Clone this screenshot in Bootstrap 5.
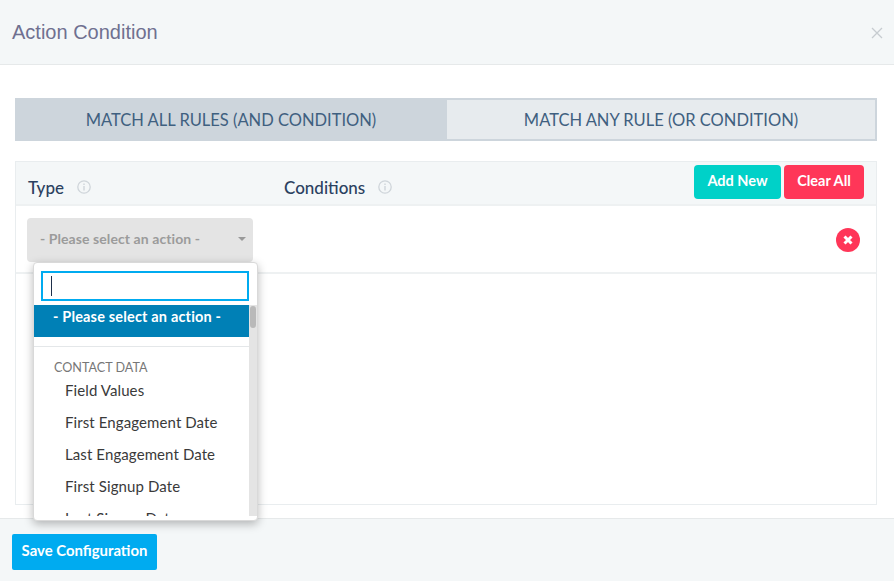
<!DOCTYPE html>
<html lang="en">
<head>
<meta charset="utf-8">
<title>Action Condition</title>
<link href="https://cdn.jsdelivr.net/npm/bootstrap@5.3.0/dist/css/bootstrap.min.css" rel="stylesheet">
<style>
html,body{height:100%;overflow:hidden;background:#fff}
body{font-family:"Lato","Liberation Sans",sans-serif;color:#2b3f5c}
.shell{height:581px}
.topbar{height:65px;background:#f4f7f8;border-bottom:1px solid #e6e9ea;padding:0 12px}
.topbar h1{font:400 20px/1 "Liberation Sans",Arial,sans-serif;color:#6f7090;margin:0}
.closer{width:12px;height:12px;margin-right:-1px;color:#c6ccd0;display:block;position:relative;top:1px}
.mainzone{height:453px;padding:33px 17px 13px 15px}
.tabs{height:43px;font-size:16.5px;font-weight:400;color:#3f6080;margin-bottom:20px}
.tabx.on{background:#cdd5dc;width:432px;padding-top:1px}
.tabx.off{background:#e7ebee;border:2px solid #cdd5dc;border-left:0;flex:1;padding-top:1px}
.grid-box{height:344px;border:1px solid #e9edef;position:relative}
.gridhead{height:44px;background:#f4f7f8;border-bottom:2px solid #eef1f2;padding:0 12px 0 12px}
.hcell{font-size:17px;font-weight:500;color:#2b4160;line-height:1;position:relative;top:4px}
.hcell.first{width:256px;gap:13px}
.hcell.second{gap:13px}
.btnx{height:34px;border:0;border-radius:4px;color:#fff;font-size:14.5px;font-weight:700;line-height:1;position:relative;top:-1px;padding:0 0 2px}
.btnx.teal{background:#00d1c8;width:87px}
.btnx.red{background:#ff3658;width:80px;margin-left:3px}
.datarow{height:68px;border-bottom:2px solid #eef1f2;padding:1px 16px 0 11px}
.selbox{width:226px;height:44px;background:#e4e4e4;border-radius:4px;color:#9b9b9b;font-size:14px;font-weight:700;padding:0 7px 2px 13px;letter-spacing:.08px}
.caretx{width:0;height:0;border:4px solid transparent;border-top:4px solid #999;border-bottom:0}
.delx{width:24px;height:24px;background:#ff3658;border-radius:50%}
.popup{position:absolute;left:17px;top:100px;width:225px;height:259px;background:#fff;border:1px solid #d9d9d9;border-radius:4px;box-shadow:0 3px 10px rgba(0,0,0,.28);overflow:hidden}
.searchline{padding:8px 8px 4px 7px;height:42px}
.searchfield{height:30px;border:2px solid #00abf0;padding:0 0 0 8px;display:flex;align-items:center}
.cursorbar{display:block;width:1px;height:20px;background:#1e2f4a}
.optzone{height:211px;overflow:hidden;position:relative;padding-right:8px}
.picked{height:32px;background:#0080b6;color:#fff;font-size:14.5px;font-weight:700;padding:3px 0 0 19px;line-height:18px;letter-spacing:.17px}
.sepline{border-top:1px solid #e4e7e9;margin-top:9px;height:12px}
.grouphd{font-size:12.6px;color:#777;padding-left:20px;line-height:20px}
.optline{font-size:15px;color:#3a3a3a;height:32px;line-height:18px;padding:3px 0 0 31px;letter-spacing:.1px}
.scrollrail{position:absolute;right:0;top:0;bottom:0;width:8px;background:#e4e4e4}
.scrollthumb{margin:1px 0 0 1px;width:6px;height:22px;background:#b9b9b9;border-radius:3px}
.bottombar{height:63px;background:#f4f7f8;border-top:1px solid #e6e9ea;padding:15px 12px 0}
.savebtn{width:145px;height:36px;background:#00abf0;color:#fff;border:0;border-radius:2px;padding:0 0 3px;font-size:14.9px;font-weight:700}
</style>
</head>
<body>
<div class="shell d-flex flex-column">
  <div class="topbar d-flex align-items-center justify-content-between">
    <h1>Action Condition</h1>
    <svg class="closer" viewBox="0 0 12 12" aria-label="Close"><path d="M1 1l10 10M11 1L1 11" stroke="currentColor" stroke-width="1.3" fill="none"/></svg>
  </div>
  <div class="mainzone">
    <div class="tabs d-flex">
      <div class="tabx on d-flex align-items-center justify-content-center">MATCH ALL RULES (AND CONDITION)</div>
      <div class="tabx off d-flex align-items-center justify-content-center">MATCH ANY RULE (OR CONDITION)</div>
    </div>
    <div class="grid-box">
      <div class="gridhead d-flex align-items-center">
        <div class="hcell first d-flex align-items-center">Type
          <svg width="14" height="14" viewBox="0 0 14 14"><circle cx="7" cy="7" r="6.2" fill="none" stroke="#cfd5da" stroke-width="1.3"/><path d="M7 3.500v1.400M7 6v4.500" stroke="#cfd5da" stroke-width="1.4"/></svg>
        </div>
        <div class="hcell second d-flex align-items-center">Conditions
          <svg width="14" height="14" viewBox="0 0 14 14"><circle cx="7" cy="7" r="6.2" fill="none" stroke="#cfd5da" stroke-width="1.3"/><path d="M7 3.500v1.400M7 6v4.500" stroke="#cfd5da" stroke-width="1.4"/></svg>
        </div>
        <div class="ms-auto d-flex">
          <button class="btnx teal" type="button">Add New</button>
          <button class="btnx red" type="button">Clear All</button>
        </div>
      </div>
      <div class="datarow d-flex align-items-center justify-content-between">
        <div class="selbox d-flex align-items-center justify-content-between">
          <span>- Please select an action -</span><span class="caretx"></span>
        </div>
        <div class="delx d-flex align-items-center justify-content-center">
          <svg width="10" height="10" viewBox="0 0 10 10"><path d="M1.5 1.5l7 7M8.500 1.500l-7 7" stroke="#fff" stroke-width="3"/></svg>
        </div>
      </div>
      <div class="popup">
        <div class="searchline"><div class="searchfield"><span class="cursorbar"></span></div></div>
        <div class="optzone">
          <div class="picked">- Please select an action -</div>
          <div class="sepline"></div>
          <div class="grouphd">CONTACT DATA</div>
          <div class="optline">Field Values</div>
          <div class="optline">First Engagement Date</div>
          <div class="optline">Last Engagement Date</div>
          <div class="optline">First Signup Date</div>
          <div class="optline">Last Signup Date</div>
          <div class="scrollrail"><div class="scrollthumb"></div></div>
        </div>
      </div>
    </div>
  </div>
  <div class="bottombar"><button class="savebtn" type="button">Save Configuration</button></div>
</div>
<script src="https://cdn.jsdelivr.net/npm/bootstrap@5.3.0/dist/js/bootstrap.bundle.min.js"></script>
</body>
</html>
